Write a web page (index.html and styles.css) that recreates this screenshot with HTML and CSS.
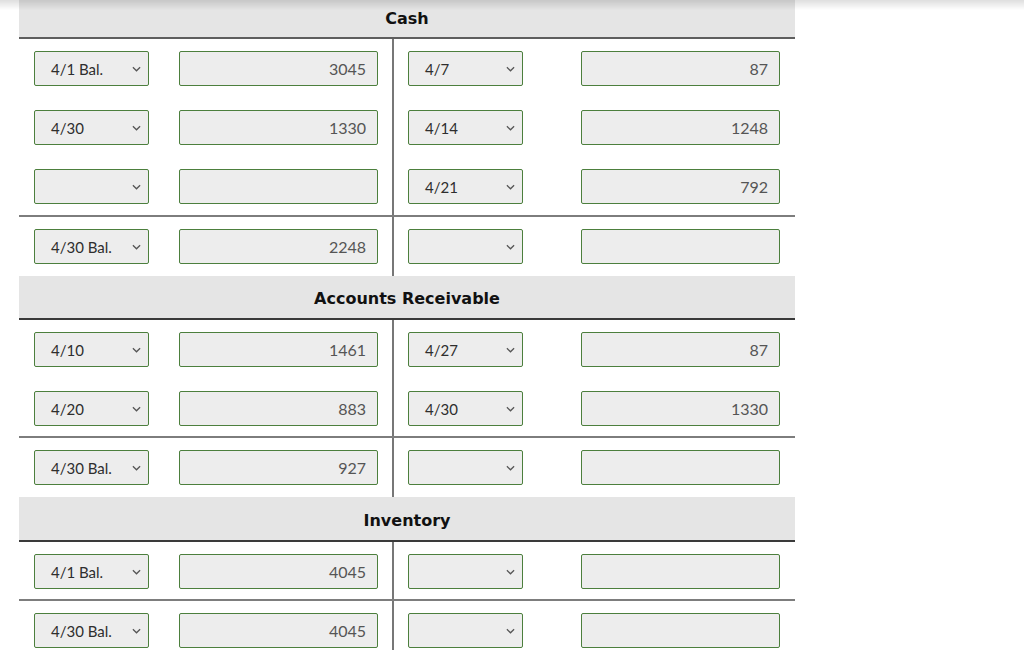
FILE: index.html
```html
<!DOCTYPE html>
<html>
<head>
<meta charset="utf-8">
<link rel="stylesheet" href="styles.css">
</head>
<body>
<div class="shade"></div>
<div class="ledger">
  <div class="head head-first">Cash</div>
  <div class="row">
    <div class="cell left"><div class="sel"><span>4/1 Bal.</span><svg viewBox="0 0 10 6"><path d="M1 1l4 4 4-4"/></svg></div><input class="amt" value="3045"></div>
    <div class="cell right"><div class="sel"><span>4/7</span><svg viewBox="0 0 10 6"><path d="M1 1l4 4 4-4"/></svg></div><input class="amt" value="87"></div>
  </div>
  <div class="row">
    <div class="cell left"><div class="sel"><span>4/30</span><svg viewBox="0 0 10 6"><path d="M1 1l4 4 4-4"/></svg></div><input class="amt" value="1330"></div>
    <div class="cell right"><div class="sel"><span>4/14</span><svg viewBox="0 0 10 6"><path d="M1 1l4 4 4-4"/></svg></div><input class="amt" value="1248"></div>
  </div>
  <div class="row rule tall">
    <div class="cell left"><div class="sel"><span></span><svg viewBox="0 0 10 6"><path d="M1 1l4 4 4-4"/></svg></div><input class="amt" value=""></div>
    <div class="cell right"><div class="sel"><span>4/21</span><svg viewBox="0 0 10 6"><path d="M1 1l4 4 4-4"/></svg></div><input class="amt" value="792"></div>
  </div>
  <div class="row">
    <div class="cell left"><div class="sel"><span>4/30 Bal.</span><svg viewBox="0 0 10 6"><path d="M1 1l4 4 4-4"/></svg></div><input class="amt" value="2248"></div>
    <div class="cell right"><div class="sel"><span></span><svg viewBox="0 0 10 6"><path d="M1 1l4 4 4-4"/></svg></div><input class="amt" value=""></div>
  </div>

  <div class="head">Accounts Receivable</div>
  <div class="row">
    <div class="cell left"><div class="sel"><span>4/10</span><svg viewBox="0 0 10 6"><path d="M1 1l4 4 4-4"/></svg></div><input class="amt" value="1461"></div>
    <div class="cell right"><div class="sel"><span>4/27</span><svg viewBox="0 0 10 6"><path d="M1 1l4 4 4-4"/></svg></div><input class="amt" value="87"></div>
  </div>
  <div class="row rule">
    <div class="cell left"><div class="sel"><span>4/20</span><svg viewBox="0 0 10 6"><path d="M1 1l4 4 4-4"/></svg></div><input class="amt" value="883"></div>
    <div class="cell right"><div class="sel"><span>4/30</span><svg viewBox="0 0 10 6"><path d="M1 1l4 4 4-4"/></svg></div><input class="amt" value="1330"></div>
  </div>
  <div class="row">
    <div class="cell left"><div class="sel"><span>4/30 Bal.</span><svg viewBox="0 0 10 6"><path d="M1 1l4 4 4-4"/></svg></div><input class="amt" value="927"></div>
    <div class="cell right"><div class="sel"><span></span><svg viewBox="0 0 10 6"><path d="M1 1l4 4 4-4"/></svg></div><input class="amt" value=""></div>
  </div>

  <div class="head head-tall">Inventory</div>
  <div class="row rule">
    <div class="cell left"><div class="sel"><span>4/1 Bal.</span><svg viewBox="0 0 10 6"><path d="M1 1l4 4 4-4"/></svg></div><input class="amt" value="4045"></div>
    <div class="cell right"><div class="sel"><span></span><svg viewBox="0 0 10 6"><path d="M1 1l4 4 4-4"/></svg></div><input class="amt" value=""></div>
  </div>
  <div class="row">
    <div class="cell left"><div class="sel"><span>4/30 Bal.</span><svg viewBox="0 0 10 6"><path d="M1 1l4 4 4-4"/></svg></div><input class="amt" value="4045"></div>
    <div class="cell right"><div class="sel"><span></span><svg viewBox="0 0 10 6"><path d="M1 1l4 4 4-4"/></svg></div><input class="amt" value=""></div>
  </div>
</div>
</body>
</html>
```

FILE: styles.css
```css
html, body {
  margin: 0;
  padding: 0;
  background: #ffffff;
  font-family: Lato, "Open Sans", "Liberation Sans", sans-serif;
  overflow: hidden;
}

.shade {
  position: fixed;
  top: 0;
  left: 0;
  right: 0;
  height: 10px;
  background: linear-gradient(rgba(0, 0, 0, 0.13), rgba(0, 0, 0, 0));
  pointer-events: none;
  z-index: 5;
}

.ledger {
  width: 776px;
  margin-left: 19px;
}

.head {
  height: 42px;
  box-sizing: content-box;
  background: #e5e5e5;
  border-bottom: 2px solid #3a3a3a;
  display: flex;
  align-items: center;
  justify-content: center;
  font-family: "DejaVu Sans", Verdana, sans-serif;
  font-weight: 700;
  font-size: 16px;
  color: #111;
  padding-top: 0;
}

.head:not(.head-first) {
  height: 39px;
  padding-top: 3px;
}

.head-first {
  height: 37px;
  border-bottom-color: #5e5e5e;
}

.head.head-tall {
  height: 40px;
}

.row {
  display: grid;
  grid-template-columns: 375px 401px;
  height: 59px;
  box-sizing: border-box;
}

.row.rule {
  border-bottom: 2px solid #7d7d7d;
}

.row.tall {
  height: 60px;
}

.cell {
  display: flex;
  justify-content: space-between;
  align-items: flex-start;
  padding-top: 12px;
  box-sizing: border-box;
}

.cell.left {
  border-right: 2px solid #777;
  padding-left: 15px;
  padding-right: 14px;
}

.cell.right {
  padding-left: 14px;
  padding-right: 15px;
}

.sel {
  width: 115px;
  height: 35px;
  box-sizing: border-box;
  border: 1px solid #4c7f3d;
  border-radius: 2px;
  background: #ededed;
  display: flex;
  align-items: center;
  justify-content: space-between;
  padding: 0 7px 0 16px;
  font-size: 15px;
  color: #2e2e2e;
}

.sel svg {
  width: 9px;
  height: 6px;
  fill: none;
  stroke: #555;
  stroke-width: 1.4;
}

.amt {
  width: 199px;
  height: 35px;
  box-sizing: border-box;
  border: 1px solid #4c7f3d;
  border-radius: 2px;
  background: #ededed;
  font-family: Lato, "Open Sans", "Liberation Sans", sans-serif;
  font-size: 16px;
  color: #555;
  text-align: right;
  padding: 0 11px 0 8px;
  margin: 0;
  outline: none;
}
```
